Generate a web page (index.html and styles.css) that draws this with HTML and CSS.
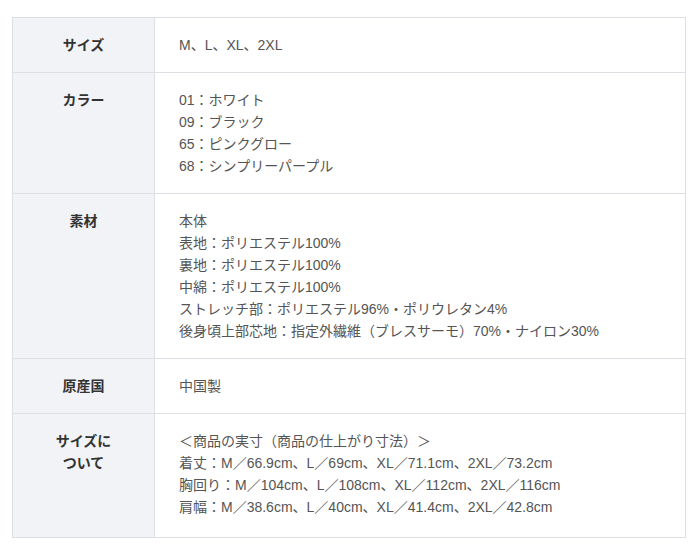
FILE: index.html
```html
<!DOCTYPE html>
<html lang="ja">
<head>
<meta charset="utf-8">
<link rel="stylesheet" href="styles.css">
</head>
<body>
<table class="spec">
  <tr>
    <th>サイズ</th>
    <td>M、L、XL、2XL</td>
  </tr>
  <tr>
    <th>カラー</th>
    <td>01：ホワイト<br>09：ブラック<br>65：ピンクグロー<br>68：シンプリーパープル</td>
  </tr>
  <tr>
    <th>素材</th>
    <td>本体<br>表地：ポリエステル100%<br>裏地：ポリエステル100%<br>中綿：ポリエステル100%<br>ストレッチ部：ポリエステル96%・ポリウレタン4%<br>後身頃上部芯地：指定外繊維（ブレスサーモ）70%・ナイロン30%</td>
  </tr>
  <tr>
    <th>原産国</th>
    <td>中国製</td>
  </tr>
  <tr class="last">
    <th>サイズに<br>ついて</th>
    <td>＜商品の実寸（商品の仕上がり寸法）＞<br>着丈：M／66.9cm、L／69cm、XL／71.1cm、2XL／73.2cm<br>胸回り：M／104cm、L／108cm、XL／112cm、2XL／116cm<br>肩幅：M／38.6cm、L／40cm、XL／41.4cm、2XL／42.8cm</td>
  </tr>
</table>
</body>
</html>
```

FILE: styles.css
```css
html, body {
  margin: 0;
  padding: 0;
  background: #ffffff;
}
body {
  padding: 17px 12px 0 12px;
  font-family: "Liberation Sans", "Noto Sans CJK JP", sans-serif;
  font-size: 14px;
  line-height: 22px;
}
.spec {
  width: 674px;
  border-collapse: collapse;
}
.spec th,
.spec td {
  border: 1px solid #dcdfe3;
  padding: 16px 0;
  vertical-align: top;
}
.spec .last th,
.spec .last td {
  padding-bottom: 19px;
}
.spec th {
  width: 141px;
  background: #f1f3f7;
  color: #333333;
  font-weight: bold;
  text-align: center;
}
.spec td {
  padding-left: 24px;
  color: #555555;
  text-align: left;
}
```
